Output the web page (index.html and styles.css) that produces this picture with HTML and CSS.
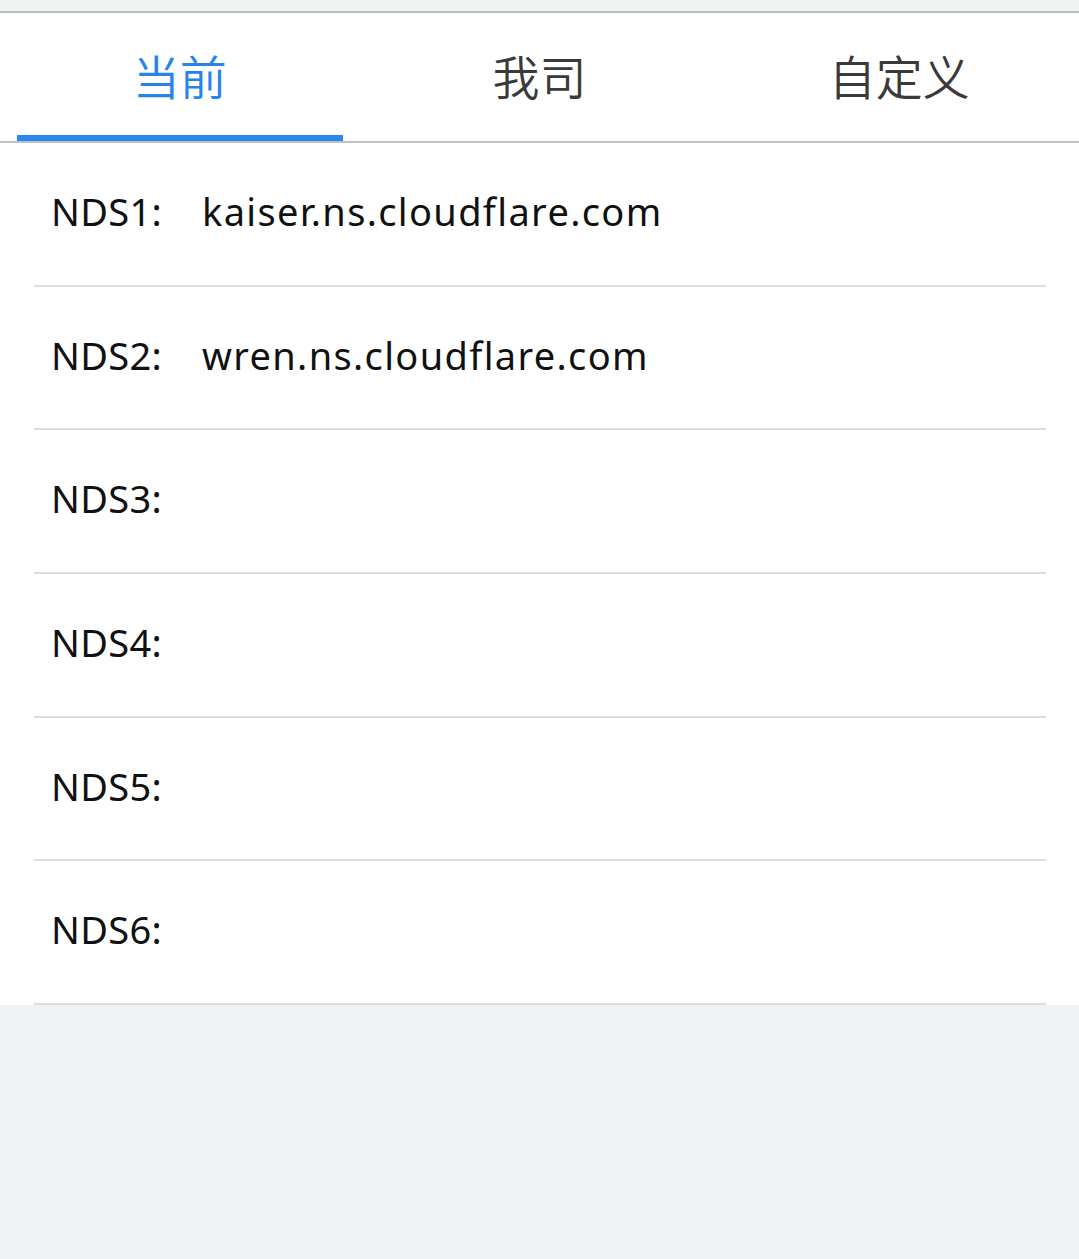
FILE: index.html
```html
<!DOCTYPE html>
<html lang="zh">
<head>
<meta charset="utf-8">
<title>NDS</title>
<link rel="stylesheet" href="styles.css">
</head>
<body>
<div class="topbar"></div>
<nav class="tabs">
  <div class="tab active"><span class="tab-label">当前</span><span class="tab-bar"></span></div>
  <div class="tab"><span class="tab-label">我司</span><span class="tab-bar"></span></div>
  <div class="tab"><span class="tab-label">自定义</span><span class="tab-bar"></span></div>
</nav>
<section class="list">
  <div class="row"><span class="label">NDS1:</span><span class="value">kaiser.ns.cloudflare.com</span></div>
  <div class="row"><span class="label">NDS2:</span><span class="value">wren.ns.cloudflare.com</span></div>
  <div class="row"><span class="label">NDS3:</span><span class="value"></span></div>
  <div class="row"><span class="label">NDS4:</span><span class="value"></span></div>
  <div class="row"><span class="label">NDS5:</span><span class="value"></span></div>
  <div class="row"><span class="label">NDS6:</span><span class="value"></span></div>
</section>
</body>
</html>
```
FILE: styles.css
```css
html, body {
  margin: 0;
  padding: 0;
}
body {
  background: #eff3f4;
  font-family: "Noto Sans", "Noto Sans CJK SC", sans-serif;
}
.topbar {
  height: 11px;
  background: #eff3f4;
  border-bottom: 2px solid #bdbdbd;
}
.tabs {
  display: grid;
  grid-template-columns: 1fr 1fr 1fr;
  height: 128px;
  background: #ffffff;
  border-bottom: 2px solid #c0c0c0;
}
.tab {
  display: flex;
  flex-direction: column;
  align-items: stretch;
}
.tab-label {
  flex: 1;
  display: flex;
  align-items: center;
  justify-content: center;
  font-family: "Noto Sans CJK SC", sans-serif;
  font-weight: 350;
  font-size: 47px;
  color: #3a3a3a;
}
.tab-bar {
  height: 6px;
  margin: 0 17px;
}
.tab.active .tab-label {
  color: #2684ea;
}
.tab.active .tab-bar {
  background: #2888ee;
}
.list {
  background: #ffffff;
  padding: 0 33px 0 34px;
}
.row {
  height: 135.7px;
  box-sizing: content-box;
  padding: 0 0 6px 17px;
  border-bottom: 2px solid #dddddd;
  display: flex;
  align-items: center;
  font-size: 38px;
  color: #111111;
  font-variant-ligatures: none;
}
.label {
  width: 151px;
  flex: none;
  letter-spacing: 0.3px;
}
.value {
  flex: 1;
  letter-spacing: 1.35px;
}
```
